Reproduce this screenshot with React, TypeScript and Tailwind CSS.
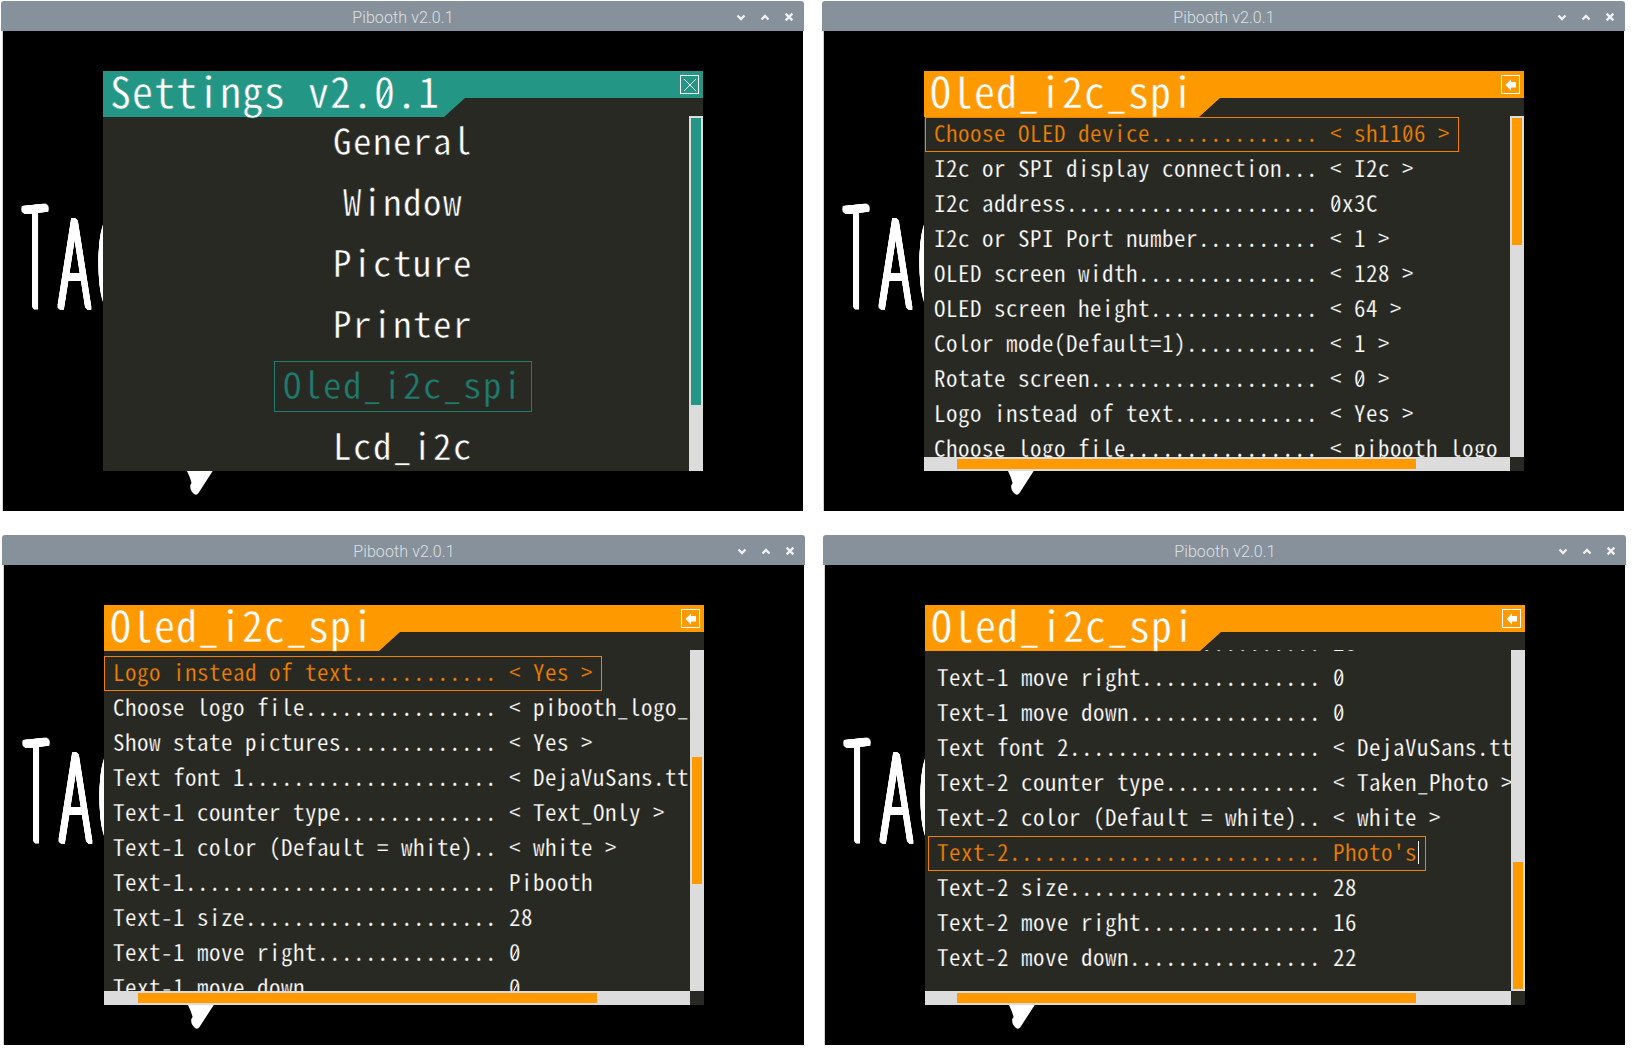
import React from "react";

type Row = { label: string; value: string };

const MONO = "font-['Noto_Sans_Mono_CJK_SC','Noto_Sans_Mono_CJK_JP','DejaVu_Sans_Mono',monospace]";

/* Zero carries a diagonal slash in the menu face. */
function Slashed({ text }: { text: string }) {
  return (
    <>
      {text.split(/(0)/).map((part, i) =>
        part === "0" ? (
          <span key={i} className="relative">
            0
            <svg className="absolute left-0 top-1/2 h-[0.74em] w-[0.5em] -translate-y-[34%]" viewBox="0 0 12 18" preserveAspectRatio="none">
              <path d="M3.400 14 8.600 4" stroke="currentColor" strokeWidth="1.100" />
            </svg>
          </span>
        ) : (
          <React.Fragment key={i}>{part}</React.Fragment>
        )
      )}
    </>
  );
}

function Backdrop() {
  return (
    <>
      <div
        aria-hidden
        className="absolute left-0 top-0 h-full w-full font-['Inter'] font-thin leading-none text-white [filter:drop-shadow(1.5px_0_0_#fff)_drop-shadow(-1.5px_0_0_#fff)_drop-shadow(0_1.5px_0_#fff)_drop-shadow(0_-1.5px_0_#fff)_drop-shadow(1px_1px_0_#fff)_drop-shadow(-1px_-1px_0_#fff)]"
      >
        <span className="absolute left-[19px] top-[160px] origin-top-left -skew-y-2 scale-x-[0.32] text-[137px]">T</span>
        <span className="absolute left-[56px] top-[175px] origin-top-left scale-x-[0.42] text-[119px]">A</span>
        <span className="absolute left-[96px] top-[175px] origin-top-left scale-x-[0.3] text-[119px]">C</span>
      </div>
      <svg className="absolute left-[184px] top-[440px]" width="28" height="25" viewBox="0 0 28 25">
        <path d="M0 0H25.700L11.500 22Q9.500 25 7 23Q2.500 19 3.300 14Q5 12 4.300 11Q3 6 0 0Z" fill="#fff" />
      </svg>
    </>
  );
}

function WindowFrame({ children }: { children: React.ReactNode }) {
  return (
    <div className="w-[803px]">
      <div className="flex h-[30px] items-center rounded-t-[3px] bg-[#87919b]">
        <div className="w-[92px]" />
        <div className="flex-1 pt-[3px] text-center font-['Roboto'] text-[16px] font-light leading-[30px] tracking-[0.1px] text-[#dde0e3]">Pibooth v2.0.1</div>
        <svg className="mr-[11px]" width="80" height="30" viewBox="0 0 80 30" fill="none" stroke="#f0f1f2" strokeWidth="2.3">
          <path d="M24.500 14.500 28 18 31.500 14.500" />
          <path d="M48.500 18.500 52 15 55.500 18.500" />
          <path d="M72.600 12.600 79.400 19.400M79.400 12.600 72.600 19.400" />
        </svg>
      </div>
      <div className="ml-px mr-px border-l border-[#d0d0d0]">
        <div className="relative h-[480px] w-[800px] overflow-hidden bg-black pl-[100px] pt-[40px]">
          <Backdrop />
          {children}
        </div>
      </div>
    </div>
  );
}

function Header({ title, accent, width, close }: { title: string; accent: string; width: number; close?: boolean }) {
  return (
    <div className="relative z-10 h-[46px]">
      <svg className="absolute left-0 top-0" width="600" height="46" viewBox="0 0 600 46">
        <path d={`M0 0H600V27H${width + 21}L${width} 46H0Z`} fill={accent} />
      </svg>
      <div className={`relative flex justify-between pr-[4px] ${close ? "pl-[7px] [-webkit-text-stroke:0.5px_#239686]" : "pl-[6px] [-webkit-text-stroke:0.5px_#ff9900]"}`}>
        <div className={`${MONO} whitespace-pre text-[42px] font-light leading-[37px] tracking-[1px] text-white`}>
          <Slashed text={title} />
        </div>
        <svg className="mt-[4px]" width="19" height="19" viewBox="0 0 19 19">
          <rect x="0.5" y="0.5" width="18" height="18" fill="none" stroke="#fff" />
          {close ? (
            <path d="M4 4 16 16M16 4 4 16" stroke="#fff" strokeWidth="1" />
          ) : (
            <path d="M4.500 10 10 4.500V7H15V12.500H10V15.500Z" fill="#fff" />
          )}
        </svg>
      </div>
    </div>
  );
}

function VBar({ accent, top, height }: { accent: string; top: number; height: number }) {
  return (
    <div className="w-[14px] bg-[#dcdcdc] px-[2px]">
      <div style={{ marginTop: top, height, backgroundColor: accent }} />
    </div>
  );
}

function OptionRow({ row, selected, cursor }: { row: Row; selected: boolean; cursor?: boolean }) {
  return (
    <div
      className={`${MONO} flex h-[35px] w-max border px-[8px] text-[23px] font-light leading-[29px] tracking-[0.5px] [-webkit-text-stroke:0.25px_#282923] ${
        selected ? "border-[#f08000] text-[#f08000]" : "border-transparent text-white"
      }`}
    >
      <span className="whitespace-pre">{row.label.padEnd(32, ".") + " "}</span>
      <span className="whitespace-pre">
        <Slashed text={row.value} />
      </span>
      {cursor && <span className="-mr-[2px] ml-px mt-[4px] h-[23px] w-px bg-white" />}
    </div>
  );
}

type OptionsProps = {
  rows: Row[];
  selected: number;
  cursor?: boolean;
  offsetX: number;
  offsetY: number;
  thumbTop: number;
  thumbLeft: number;
};

function OptionsMenu({ rows, selected, cursor, offsetX, offsetY, thumbTop, thumbLeft }: OptionsProps) {
  return (
    <div className="relative h-[400px] w-[600px] overflow-hidden bg-[#282923]">
      <Header title="Oled_i2c_spi" accent="#ff9900" width={275} />
      <div className="-mt-px flex h-[341px]">
        <div className="h-full w-[586px] overflow-hidden">
          <div style={{ marginTop: offsetY, marginLeft: offsetX }}>
            {rows.map((r, i) => (
              <OptionRow key={i} row={r} selected={i === selected} cursor={cursor && i === selected} />
            ))}
          </div>
        </div>
        <VBar accent="#ff9900" top={thumbTop} height={127} />
      </div>
      <div className="h-[14px] w-[586px] bg-[#dcdcdc] py-[2px]">
        <div className="h-[10px] w-[459px] bg-[#ff9900]" style={{ marginLeft: thumbLeft }} />
      </div>
    </div>
  );
}

function SettingsMenu() {
  const items = ["General", "Window", "Picture", "Printer", "Oled_i2c_spi", "Lcd_i2c"];
  return (
    <div className="relative h-[400px] w-[600px] overflow-hidden bg-[#282923]">
      <Header title="Settings v2.0.1" accent="#239686" width={341} close />
      <div className="-mt-px flex h-[355px]">
        <div className="flex h-full w-[586px] flex-col items-center gap-[10px] pl-[14px] pt-px">
          {items.map((item) => (
            <div
              key={item}
              className={`${MONO} h-[51px] shrink-0 whitespace-pre border px-[8px] text-[37px] font-light leading-[42px] tracking-[1.5px] [-webkit-text-stroke:0.5px_#282923] ${
                item === "Oled_i2c_spi" ? "border-[#1f7b6e] text-[#1f7b6e]" : "border-transparent text-white"
              }`}
            >
              {item}
            </div>
          ))}
        </div>
        <VBar accent="#239686" top={2} height={287} />
      </div>
    </div>
  );
}

const firstRows: Row[] = [
  { label: "Choose OLED device", value: "< sh1106 >" },
  { label: "I2c or SPI display connection", value: "< I2c >" },
  { label: "I2c address", value: "0x3C" },
  { label: "I2c or SPI Port number", value: "< 1 >" },
  { label: "OLED screen width", value: "< 128 >" },
  { label: "OLED screen height", value: "< 64 >" },
  { label: "Color mode(Default=1)", value: "< 1 >" },
  { label: "Rotate screen", value: "< 0 >" },
  { label: "Logo instead of text", value: "< Yes >" },
  { label: "Choose logo file", value: "< pibooth_logo_" },
];

const middleRows: Row[] = [
  { label: "Logo instead of text", value: "< Yes >" },
  { label: "Choose logo file", value: "< pibooth_logo_" },
  { label: "Show state pictures", value: "< Yes >" },
  { label: "Text font 1", value: "< DejaVuSans.tt" },
  { label: "Text-1 counter type", value: "< Text_Only >" },
  { label: "Text-1 color (Default = white)", value: "< white >" },
  { label: "Text-1", value: "Pibooth" },
  { label: "Text-1 size", value: "28" },
  { label: "Text-1 move right", value: "0" },
  { label: "Text-1 move down", value: "0" },
];

const lastRows: Row[] = [
  { label: "Text-1 size", value: "28" },
  { label: "Text-1 move right", value: "0" },
  { label: "Text-1 move down", value: "0" },
  { label: "Text font 2", value: "< DejaVuSans.tt" },
  { label: "Text-2 counter type", value: "< Taken_Photo >" },
  { label: "Text-2 color (Default = white)", value: "< white >" },
  { label: "Text-2", value: "Photo's" },
  { label: "Text-2 size", value: "28" },
  { label: "Text-2 move right", value: "16" },
  { label: "Text-2 move down", value: "22" },
];

export default function App() {
  return (
    <div className="flex h-[1052px] w-[1634px] flex-col gap-[24px] overflow-hidden bg-white pt-px">
      <div className="flex gap-[18px] pl-px">
        <WindowFrame>
          <SettingsMenu />
        </WindowFrame>
        <WindowFrame>
          <OptionsMenu rows={firstRows} selected={0} offsetX={1} offsetY={1} thumbTop={2} thumbLeft={33} />
        </WindowFrame>
      </div>
      <div className="flex gap-[18px] pl-[2px]">
        <WindowFrame>
          <OptionsMenu rows={middleRows} selected={0} offsetX={0} offsetY={6} thumbTop={107} thumbLeft={34} />
        </WindowFrame>
        <WindowFrame>
          <OptionsMenu rows={lastRows} selected={6} cursor offsetX={3} offsetY={-24} thumbTop={212} thumbLeft={32} />
        </WindowFrame>
      </div>
    </div>
  );
}
